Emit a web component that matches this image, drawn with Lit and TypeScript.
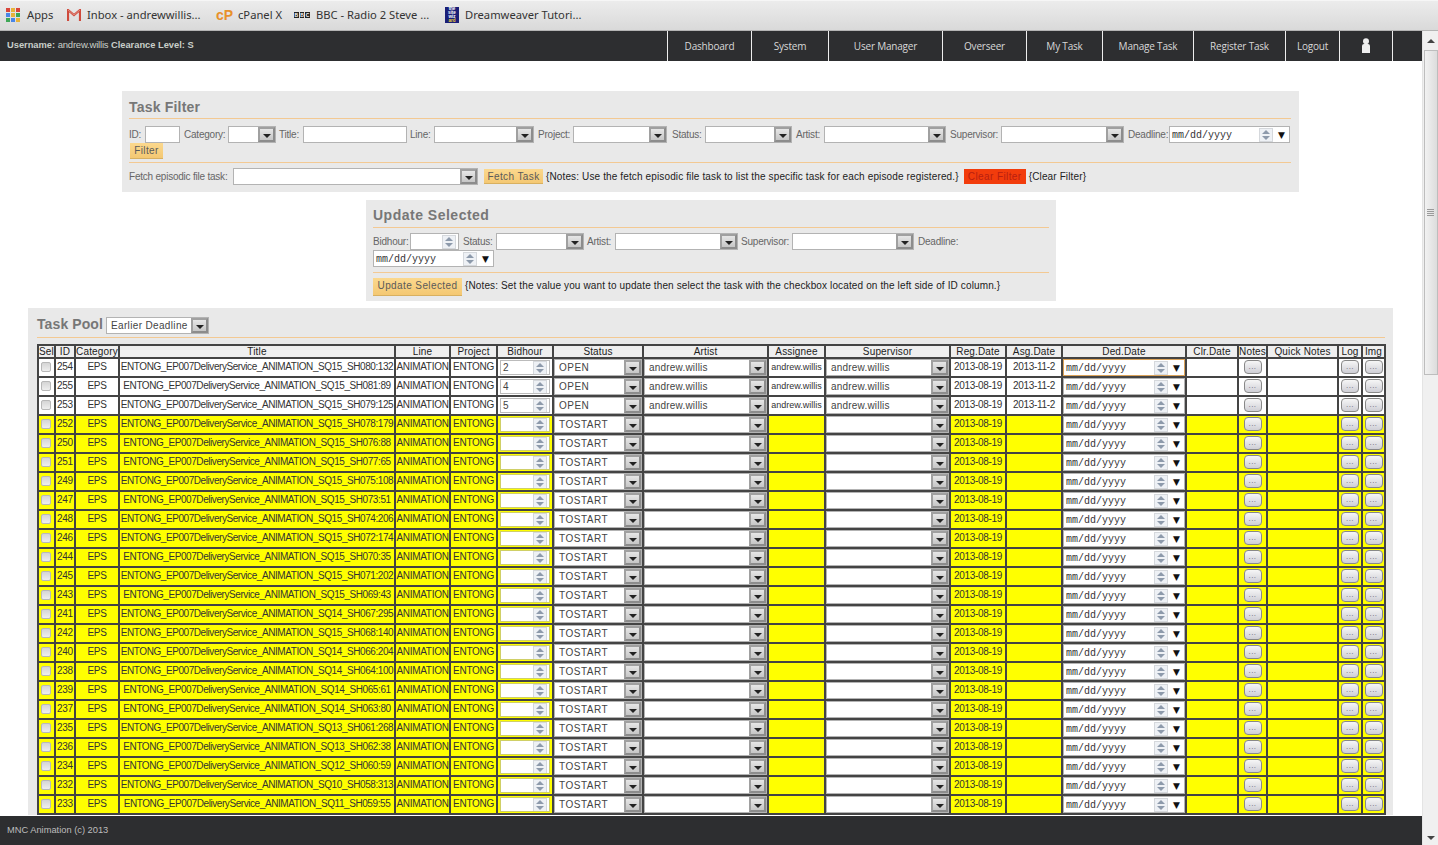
import { LitElement, html, css, svg } from "lit";
import { customElement } from "lit/decorators.js";

type Field = { label: string; lw: number; ml: number; kind: "text" | "select" | "spin" | "date"; w: number };

const filterFields: Field[] = [
  { label: "ID:", lw: 13, ml: 0, kind: "text", w: 35 },
  { label: "Category:", lw: 41, ml: 1, kind: "select", w: 48 },
  { label: "Title:", lw: 21, ml: 0, kind: "text", w: 104 },
  { label: "Line:", lw: 21, ml: 0, kind: "select", w: 100 },
  { label: "Project:", lw: 32, ml: 1, kind: "select", w: 94 },
  { label: "Status:", lw: 30, ml: 2, kind: "select", w: 87 },
  { label: "Artist:", lw: 25, ml: 1, kind: "select", w: 122 },
  { label: "Supervisor:", lw: 48, ml: 1, kind: "select", w: 123 },
  { label: "Deadline:", lw: 38, ml: 1, kind: "date", w: 121 },
];

const updateFields: Field[] = [
  { label: "Bidhour:", lw: 34, ml: 0, kind: "spin", w: 49 },
  { label: "Status:", lw: 30, ml: 1, kind: "select", w: 88 },
  { label: "Artist:", lw: 25, ml: 0, kind: "select", w: 123 },
  { label: "Supervisor:", lw: 48, ml: 0, kind: "select", w: 122 },
  { label: "Deadline:", lw: 40, ml: 1, kind: "text", w: 0 },
  { label: "", lw: 0, ml: 0, kind: "date", w: 121 },
];

const navItems: [string, number][] = [
  ["Dashboard", 84], ["System", 77], ["User Manager", 114], ["Overseer", 84], ["My Task", 76],
  ["Manage Task", 91], ["Register Task", 92], ["Logout", 54],
];

const columns: [string, number][] = [
  ["Sel", 17], ["ID", 20], ["Category", 44], ["Title", 276], ["Line", 55], ["Project", 47], ["Bidhour", 56],
  ["Status", 90], ["Artist", 125], ["Assignee", 57], ["Supervisor", 125], ["Reg.Date", 56], ["Asg.Date", 56],
  ["Ded.Date", 124], ["Clr.Date", 52], ["Notes", 29], ["Quick Notes", 71], ["Log", 24], ["Img", 23],
];

const rowsData: [number, string, number][] = [
  [254, "SQ15_SH080", 132], [255, "SQ15_SH081", 89], [253, "SQ15_SH079", 125], [252, "SQ15_SH078", 179],
  [250, "SQ15_SH076", 88], [251, "SQ15_SH077", 65], [249, "SQ15_SH075", 108], [247, "SQ15_SH073", 51],
  [248, "SQ15_SH074", 206], [246, "SQ15_SH072", 174], [244, "SQ15_SH070", 35], [245, "SQ15_SH071", 202],
  [243, "SQ15_SH069", 43], [241, "SQ14_SH067", 295], [242, "SQ15_SH068", 140], [240, "SQ14_SH066", 204],
  [238, "SQ14_SH064", 100], [239, "SQ14_SH065", 61], [237, "SQ14_SH063", 80], [235, "SQ13_SH061", 268],
  [236, "SQ13_SH062", 38], [234, "SQ12_SH060", 59], [232, "SQ10_SH058", 313], [233, "SQ11_SH059", 55],
];

const spinIcon = svg`<svg class="spin-ic" width="14" height="14" viewBox="0 0 14 14"><rect x="0.5" y="0.5" width="13" height="13" fill="#eef1f5" stroke="#d5d8dc"/><path d="M7 2 11 6H3z" fill="#8d9aab"/><path d="M7 12 11 8H3z" fill="#8d9aab"/></svg>`;

@customElement("app-root")
export class AppRoot extends LitElement {
  static styles = css`
    :host { display: block; height: 845px; overflow: hidden; position: relative; background: #fff;
      font-family: "Liberation Sans", Arial, sans-serif; font-size: 10px; color: #444; }
    .bookmarks { height: 31px; display: flex; align-items: center; padding: 0 0 2px 6px; box-sizing: border-box;
      background: linear-gradient(#ececec, #d9d9d9); border-bottom: 1px solid #b4b4b4; border-top: 1px solid #f6f6f6;
      font: 11.2px "Noto Sans", sans-serif; color: #333; }
    .bm { display: flex; align-items: center; gap: 6px; white-space: nowrap; }
    .apps-grid { display: grid; grid-template-columns: repeat(3, 4px); gap: 1px; width: 15px; }
    .apps-grid i { width: 4px; height: 4px; display: block; }
    .cp { color: #e8912b; font: bold 14px "Liberation Sans", sans-serif; width: 16px; }
    .bbc { display: flex; gap: 1px; width: 16px; }
    .bbc b { background: #222; color: #fff; font: bold 5px "Liberation Sans", sans-serif; width: 5px; height: 6px;
      line-height: 6px; text-align: center; }
    .wiz { width: 14px; height: 16px; background: #1a1f78; color: #fff; font: bold 4.5px/4px "Liberation Sans", sans-serif;
      text-align: center; display: block; flex: none; }
    .wiz span { display: block; height: 4px; }
    .wiz span:last-child { color: #f2d23c; }
    .page { display: flex; height: 814px; }
    .main { width: 1422px; flex: none; overflow: hidden; }
    .scrollbar { width: 16px; background: #f0f0f0; display: flex; flex-direction: column; align-items: center;
      border-left: 1px solid #e4e4e4; box-sizing: border-box; }
    .sb-up { height: 19px; display: flex; align-items: center; justify-content: center; flex: none; }
    .tri-u { border: 4px solid transparent; border-top: 0; border-bottom: 4px solid #444; }
    .tri-d { border: 4px solid transparent; border-bottom: 0; border-top: 4px solid #444; }
    .sb-thumb { width: 14px; height: 325px; flex: none; background: linear-gradient(90deg, #f2f2f2, #dcdcdc);
      border: 1px solid #bdbdbd; box-sizing: border-box; display: flex; flex-direction: column; align-items: center;
      justify-content: center; gap: 1px; }
    .sb-thumb i { width: 7px; height: 1px; background: #9a9a9a; display: block; }
    .sb-space { flex: 1; }
    .sb-down { height: 14px; display: flex; align-items: center; justify-content: center; flex: none; }
    nav { height: 30px; background: #2d2e30; display: flex; justify-content: space-between; color: #ccc; }
    .user { font-weight: bold; font-size: 9.3px; padding: 8px 0 0 7px; color: #c9cfc9; }
    .user span { font-weight: normal; font-size: 9.5px; letter-spacing: -0.2px; }
    .menu { display: flex; border-left: 1px solid #eee; }
    .menu a { box-sizing: border-box; border-right: 1px solid #eee; display: flex; align-items: center; justify-content: center;
      font: 10px "Open Sans", sans-serif; letter-spacing: -0.2px; color: #d8d8d8; padding-bottom: 1px; }
    .menu a.tail { border: 0; }
    .content { display: flex; flex-direction: column; align-items: center; padding: 30px 1px 0 0; }
    .panel { background: #e9e9e9; box-sizing: border-box; }
    .filter { width: 1177px; height: 101px; padding: 7px 8px 0 7px; }
    .update { width: 690px; height: 101px; margin: 8px 0 0 1px; padding: 7px 7px 0; }
    .pool { width: 1365px; margin-top: 7px; padding: 7px 8px 0 9px; }
    h2 { margin: 0; font-size: 14px; line-height: 18px; font-weight: bold; color: #777; height: 21px; box-sizing: border-box;
      border-bottom: 1px solid #f3c993; letter-spacing: 0.2px; }
    .update h2 { letter-spacing: 0.5px; line-height: 16px; }
    .pool h2 { letter-spacing: 0.1px; height: 23px; display: flex; align-items: flex-start; gap: 3px; margin-bottom: 6px; }
    .pool h2 .val { letter-spacing: 0.35px; }
    .row { display: flex; flex-wrap: wrap; align-items: center; column-gap: 3px; }
    .filter .fields { padding-top: 7px; height: 44px; box-sizing: border-box; border-bottom: 1px solid #f3c993; align-content: flex-start; }
    .update .fields { padding-top: 5px; height: 45px; box-sizing: border-box; border-bottom: 1px solid #f3c993; align-content: flex-start; }
    .fetch { padding-top: 5px; }
    .fetch-lbl { width: 101px; }
    .lbl { color: #666; font-size: 10px; letter-spacing: -0.22px; white-space: nowrap; line-height: 16px; }
    .note { color: #222; font-size: 10px; letter-spacing: 0.13px; white-space: nowrap; font-weight: normal; }
    .update .note { margin-bottom: 4px; }
    .box { box-sizing: border-box; height: 17px; background: #fff; border: 1px solid #b3b3b3; display: flex; align-items: center;
      flex: none; overflow: hidden; text-align: left; }
    .sel { justify-content: space-between; }
    .val { padding-left: 4px; font-size: 10px; letter-spacing: 0.5px; color: #444; white-space: nowrap; font-weight: normal; }
    .arrow { width: 17px; align-self: stretch; box-sizing: border-box; background: linear-gradient(#e6e6e6, #c6c6c6);
      border: 2px solid #8c8c8c; border-top-color: #a0a0a0; border-left-color: #a0a0a0;
      display: flex; align-items: center; justify-content: center; flex: none; }
    .arrow i { border: 4px solid transparent; border-bottom: 0; border-top: 4px solid #222; margin-top: 3px; display: block; }
    .spin-val { padding-left: 2px; flex: 1; color: #444; letter-spacing: 0; }
    .spin-ic { margin-right: 2px; flex: none; }
    .date { font: 10px "Liberation Mono", monospace; color: #333; letter-spacing: 0; }
    .date-val { flex: 1; padding: 2px 0 0 2px; white-space: nowrap; text-align: left; }
    .date em { font-style: normal; font-size: 9px; color: #111; width: 15px; text-align: center; font-family: "DejaVu Sans", sans-serif; flex: none; }
    .date .spin-ic { margin-right: 1px; }
    .focus { border-color: #dba35a; }
    .btn { border: 0; box-sizing: border-box; height: 16px; padding: 0; background: linear-gradient(#fbd88d, #f4c873); border-bottom: 1px solid #d8b060;
      color: #5a5a5a; font: 10px "Liberation Sans", sans-serif; letter-spacing: 0.4px; flex: none; text-align: center; }
    .btn-filter { width: 33px; margin-left: 1px; }
    .btn-fetch { width: 59px; height: 15px; margin-left: 3px; }
    .btn-clear { width: 62px; height: 15px; background: #f23c0c; border: 0; color: #b81f10; margin-left: 2px; }
    .btn-update { width: 89px; height: 18px; padding-bottom: 2px; }
    table { border-collapse: collapse; table-layout: fixed; width: 1347px; font-size: 10px; background: #fff; }
    th, td { border: 2px solid #444; padding: 0; overflow: hidden; white-space: nowrap; text-align: center; }
    th { font-weight: normal; height: 11px; line-height: 11px; background: #efefef; color: #222; letter-spacing: 0.15px; font-size: 10px; }
    td { height: 17px; line-height: 16px; vertical-align: top; color: #333; letter-spacing: -0.3px; }
    tr.todo td { background: #ffff00; color: #333; }
    td.title { letter-spacing: -0.43px; }
    td.small { font-size: 9px; letter-spacing: 0; }
    td .box { width: 100%; height: 17px; }
    td.who .val { letter-spacing: 0.2px; }
    td .spin { margin: 1px 2px; width: calc(100% - 4px); height: 15px; border-color: #bbb; }
    tr.todo td .spin { border-color: #cfcf66; }
    .ck { display: block; width: 10px; height: 10px; margin: 3px 0 0 2px; box-sizing: border-box; border: 1px solid #b8b8b8; border-radius: 2px;
      background: linear-gradient(#d5d5d5, #eeeeee); }
    .dots { display: block; width: 18px; height: 14px; margin: 1px auto 0; box-sizing: border-box; border: 1px solid #888; border-radius: 4px;
      background: linear-gradient(#f6f6f6, #cfcfd6); color: #667; font-size: 8px; line-height: 12px; letter-spacing: 0.5px; text-align: center; }
    footer { position: absolute; left: 0; bottom: 0; width: 1422px; height: 29px; background: #2d2e30; color: #bdbdbd; font-size: 9.3px;
      line-height: 28px; padding-left: 7px; box-sizing: border-box; }
  `;

  private field(f: Field) {
    return html`${f.label ? html`<span class="lbl" style="width:${f.lw}px;margin-left:${f.ml}px">${f.label}</span>` : ""}${this.control(f.kind, f.w)}`;
  }

  private control(kind: Field["kind"], w: number) {
    if (w === 0) return "";
    const style = `width:${w}px`;
    if (kind === "text") return html`<span class="box" style=${style}></span>`;
    if (kind === "select") return this.select("", style);
    if (kind === "spin") return html`<span class="box spin" style=${style}><span class="spin-val"></span>${spinIcon}</span>`;
    return this.date(style);
  }

  private select(value: string, style = "") {
    return html`<span class="box sel" style=${style}><span class="val">${value}</span><span class="arrow"><i></i></span></span>`;
  }

  private date(style = "", focus = false) {
    return html`<span class="box date ${focus ? "focus" : ""}" style=${style}><span class="date-val">mm/dd/yyyy</span>${spinIcon}<em>▼</em></span>`;
  }

  private tableRow(r: [number, string, number], i: number) {
    const open = i < 3;
    const bid = ["2", "4", "5"][i] ?? "";
    const who = open ? "andrew.willis" : "";
    return html`<tr class=${open ? "" : "todo"}>
      <td><i class="ck"></i></td>
      <td>${r[0]}</td>
      <td>EPS</td>
      <td class="title">ENTONG_EP007DeliveryService_ANIMATION_${r[1]}:${r[2]}</td>
      <td>ANIMATION</td>
      <td>ENTONG</td>
      <td><span class="box spin"><span class="spin-val">${bid}</span>${spinIcon}</span></td>
      <td>${this.select(open ? "OPEN" : "TOSTART")}</td>
      <td class="who">${this.select(who)}</td>
      <td class="small">${who}</td>
      <td class="who">${this.select(who)}</td>
      <td>2013-08-19</td>
      <td>${open ? "2013-11-2" : ""}</td>
      <td>${this.date("", i === 0)}</td>
      <td></td>
      <td><span class="dots">...</span></td>
      <td></td>
      <td><span class="dots">...</span></td>
      <td><span class="dots">...</span></td>
    </tr>`;
  }

  render() {
    const appColors = ["#d9453a", "#e8b33c", "#d9453a", "#4a86e8", "#e8b33c", "#3fa757", "#3fa757", "#4a86e8", "#e8b33c"];
    return html`
      <div class="bookmarks">
        <div class="bm" style="width:61px">
          <span class="apps-grid">${appColors.map((c) => html`<i style="background:${c}"></i>`)}</span>Apps
        </div>
        <div class="bm" style="width:149px">
          <svg width="14" height="12" viewBox="0 0 14 12"><path d="M1 12V1l6 5 6-5v11" fill="none" stroke="#cf4a3c" stroke-width="2.2"/><path d="M1 1l6 5 6-5" fill="none" stroke="#e08a7e" stroke-width="1"/></svg>
          Inbox - andrewwillis...
        </div>
        <div class="bm" style="width:78px"><span class="cp">cP</span>cPanel X</div>
        <div class="bm" style="width:151px">
          <span class="bbc"><b>B</b><b>B</b><b>C</b></span>BBC - Radio 2 Steve ...
        </div>
        <div class="bm">
          <span class="wiz"><span>the</span><span>site</span><span>wiz</span><span>ard</span></span>Dreamweaver Tutori...
        </div>
      </div>
      <div class="page">
        <div class="main">
          <nav>
            <div class="user">Username: <span>andrew.willis</span> Clearance Level: S</div>
            <div class="menu">
              ${navItems.map(([t, w]) => html`<a style="width:${w}px">${t}</a>`)}
              <a style="width:53px" aria-label="Profile">
                <svg width="10" height="15" viewBox="0 0 10 15"><circle cx="5" cy="3.2" r="3" fill="#eee"/><path d="M1 8a2 2 0 0 1 2-2h4a2 2 0 0 1 2 2v7H1z" fill="#eee"/></svg>
              </a>
              <a class="tail" style="width:29px"></a>
            </div>
          </nav>
          <div class="content">
            <section class="panel filter">
              <h2>Task Filter</h2>
              <div class="row fields">
                ${filterFields.map((f) => this.field(f))}
                <button class="btn btn-filter">Filter</button>
              </div>
              <div class="row fetch">
                <span class="lbl fetch-lbl">Fetch episodic file task:</span>
                ${this.select("", "width:245px")}
                <button class="btn btn-fetch">Fetch Task</button>
                <span class="note">{Notes: Use the fetch episodic file task to list the specific task for each episode registered.}</span>
                <button class="btn btn-clear">Clear Filter</button>
                <span class="note">{Clear Filter}</span>
              </div>
            </section>
            <section class="panel update">
              <h2>Update Selected</h2>
              <div class="row fields">${updateFields.map((f) => this.field(f))}</div>
              <div class="row fetch">
                <button class="btn btn-update">Update Selected</button>
                <span class="note">{Notes: Set the value you want to update then select the task with the checkbox located on the left side of ID column.}</span>
              </div>
            </section>
            <section class="panel pool">
              <h2>Task Pool ${this.select("Earlier Deadline", "width:103px;margin-top:2px")}</h2>
              <table>
                <colgroup>${columns.map(([, w]) => html`<col style="width:${w}px" />`)}</colgroup>
                <thead><tr>${columns.map(([t]) => html`<th>${t}</th>`)}</tr></thead>
                <tbody>${rowsData.map((r, i) => this.tableRow(r, i))}</tbody>
              </table>
            </section>
          </div>
        </div>
        <div class="scrollbar">
          <div class="sb-up"><i class="tri-u"></i></div>
          <div class="sb-thumb"><i></i><i></i><i></i><i></i></div>
          <div class="sb-space"></div>
          <div class="sb-down"><i class="tri-d"></i></div>
        </div>
      </div>
      <footer>MNC Animation (c) 2013</footer>
    `;
  }
}
